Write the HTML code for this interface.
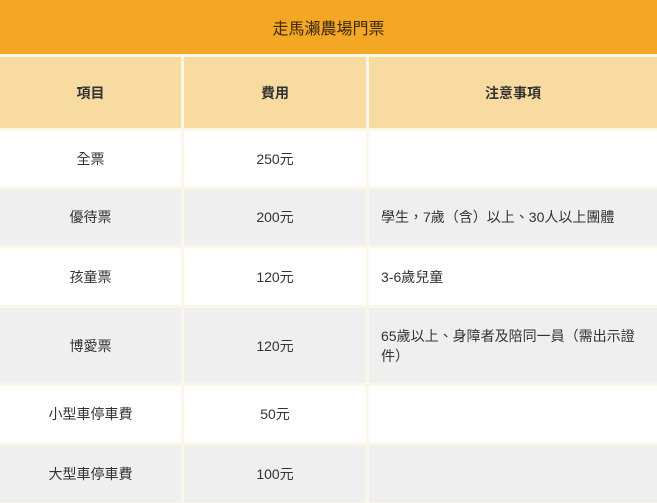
<!DOCTYPE html>
<html><head><meta charset="utf-8"><style>
body{margin:0;width:657px;height:503px;background:#fbf7e8;font-family:"Liberation Sans","Noto Sans CJK TC",sans-serif;font-size:14px;color:#333;position:relative;overflow:hidden}
div{position:absolute;box-sizing:border-box}
.t{left:0;top:0;width:657px;height:54px;background:#f4a625;color:#3a2a10;font-size:16px;display:flex;align-items:center;justify-content:center}
.c{display:flex;align-items:center;justify-content:center}
.l{justify-content:flex-start;padding-left:12px;padding-right:6px;line-height:20px}
.h{background:#f8dba0;font-weight:bold;color:#333}
.w{background:#fff}.g{background:#efefef}
</style></head><body>
<div class="t">走馬瀨農場門票</div>
<div class="c h" style="left:0;top:57px;width:181px;height:71px">項目</div>
<div class="c h" style="left:184px;top:57px;width:182px;height:71px">費用</div>
<div class="c h" style="left:369px;top:57px;width:288px;height:71px">注意事項</div>

<div class="c w" style="left:0;top:131px;width:181px;height:55px">全票</div>
<div class="c w" style="left:184px;top:131px;width:182px;height:55px">250元</div>
<div class="c w l" style="left:369px;top:131px;width:288px;height:55px"></div>

<div class="c g" style="left:0;top:189px;width:181px;height:56px">優待票</div>
<div class="c g" style="left:184px;top:189px;width:182px;height:56px">200元</div>
<div class="c g l" style="left:369px;top:189px;width:288px;height:56px">學生，7歲（含）以上、30人以上團體</div>

<div class="c w" style="left:0;top:248px;width:181px;height:57px">孩童票</div>
<div class="c w" style="left:184px;top:248px;width:182px;height:57px">120元</div>
<div class="c w l" style="left:369px;top:248px;width:288px;height:57px">3-6歲兒童</div>

<div class="c g" style="left:0;top:308px;width:181px;height:75px">博愛票</div>
<div class="c g" style="left:184px;top:308px;width:182px;height:75px">120元</div>
<div class="c g l" style="left:369px;top:308px;width:288px;height:75px"><span>65歲以上、身障者及陪同一員（需出示證<br>件）</span></div>

<div class="c w" style="left:0;top:386px;width:181px;height:56px">小型車停車費</div>
<div class="c w" style="left:184px;top:386px;width:182px;height:56px">50元</div>
<div class="c w" style="left:369px;top:386px;width:288px;height:56px"></div>

<div class="c g" style="left:0;top:445px;width:181px;height:57px">大型車停車費</div>
<div class="c g" style="left:184px;top:445px;width:182px;height:57px">100元</div>
<div class="c g" style="left:369px;top:445px;width:288px;height:57px"></div>
</body></html>
